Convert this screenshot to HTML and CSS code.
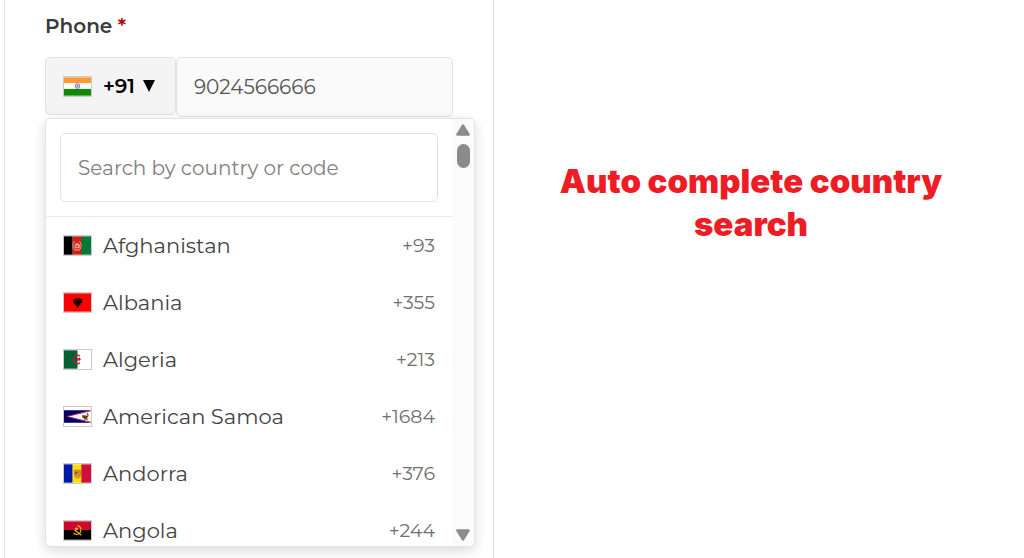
FILE: index.html
```html
<!DOCTYPE html>
<html lang="en">
<head>
    <meta charset="UTF-8">
    <meta name="viewport" content="width=device-width, initial-scale=1.0">
    <title>Phone Field</title>
    <link rel="stylesheet" href="styles.css">
</head>
<body>
    <main class="page">
        <form class="panel">
            <label class="label" for="phone">Phone <span class="required">*</span></label>
            <div class="phone-field">
                <button type="button" class="code-button" aria-expanded="true">
                    <svg class="flag" viewBox="0 0 28 19">
                        <rect width="28" height="19" fill="#fff"/>
                        <rect width="28" height="6" fill="#ff9933"/>
                        <rect y="12" width="28" height="7" fill="#138808"/>
                        <circle cx="14" cy="9" r="2.4" fill="#d8d8f0" stroke="#6a6ab8" stroke-width=".9"/>
                        <circle cx="14" cy="9" r=".8" fill="#5050a0"/>
                    </svg>
                    <span class="code">+91</span>
                    <svg class="caret" viewBox="0 0 12 12"><path d="M0 0h12L6 12z"/></svg>
                </button>
                <input class="phone-input" type="tel" id="phone" name="phone" value="9024566666">

                <div class="dropdown">
                    <div class="dropdown-main">
                        <div class="search">
                            <input class="search-input" type="text" placeholder="Search by country or code" aria-label="Search by country or code">
                        </div>
                        <ul class="countries">
                            <li class="country">
                                <svg class="flag" viewBox="0 0 28 19">
                                    <rect width="9" height="19" fill="#000"/>
                                    <rect x="9" width="10" height="19" fill="#d32011"/>
                                    <rect x="18" width="10" height="19" fill="#007a36"/>
                                    <path d="M11 5C8 9 9 13 12.500 15M16 5c3 4 2 8-1.500 10" fill="none" stroke="#ee9a92" stroke-width="1"/>
                                    <path d="M11.500 12V8.500q2-2.500 4.500 0V12zM11 14h5" fill="#ee8a80" stroke="#f0a098" stroke-width=".8"/>
                                    <path d="M12.500 10.500h2" stroke="#d32011"/>
                                </svg>
                                <span class="name">Afghanistan</span>
                                <span class="dial">+93</span>
                            </li>
                            <li class="country">
                                <svg class="flag" viewBox="0 0 28 19">
                                    <rect width="28" height="19" fill="#ff0000"/>
                                    <path d="M11.500 4.500l2 1 .5-.5.500.5 2-1 .5 1.500 2-.5-.5 3 .5 1-2 1 .5 1.500-1.500-.5-.5 1.500L14 15l-1-1.500-.5-1.500-1.500.5.5-1.500-2-1 .5-1-.5-3 2 .5z" fill="#1c0000"/>
                                </svg>
                                <span class="name">Albania</span>
                                <span class="dial">+355</span>
                            </li>
                            <li class="country">
                                <svg class="flag" viewBox="0 0 28 19">
                                    <rect width="28" height="19" fill="#fff"/>
                                    <rect width="14" height="19" fill="#006233"/>
                                    <path d="M16.500 6A4.300 4.300 0 1 0 16.500 13" fill="none" stroke="#d21034" stroke-width="1.300"/>
                                    <path d="M17 7l-.4 1.700 1.400 1-1.700.3-.5 1.800-1-1.500-1.800.2 1.200-1.300-.8-1.500 1.600.6z" fill="#d21034"/>
                                </svg>
                                <span class="name">Algeria</span>
                                <span class="dial">+213</span>
                            </li>
                            <li class="country">
                                <svg class="flag" viewBox="0 0 28 19">
                                    <rect width="28" height="19" fill="#fff"/>
                                    <path d="M0 3h28L3 9.500 28 16H0z" fill="#000066"/>
                                    <path d="M28 3.500L3 9.500l25 6" fill="none" stroke="#b31942" stroke-width="1"/>
                                    <path d="M19 8l3 .5L25 5l.5 4-1.500 2 1 2-3-.5-1.500 1 .3-2-2-1z" fill="#78532c"/>
                                    <path d="M20 9l2.500 1.500L25 8" fill="none" stroke="#28211a" stroke-width=".8"/>
                                    <path d="M23 7l1 2" stroke="#fff" stroke-width="1"/>
                                </svg>
                                <span class="name">American Samoa</span>
                                <span class="dial">+1684</span>
                            </li>
                            <li class="country">
                                <svg class="flag" viewBox="0 0 28 19">
                                    <rect width="9" height="19" fill="#0018a8"/>
                                    <rect x="9" width="10" height="19" fill="#fedf00"/>
                                    <rect x="18" width="10" height="19" fill="#d0103a"/>
                                    <path d="M11 6h6v6q-1 2-3 2.500-2-.5-3-2.500z" fill="#d5a12a" stroke="#bd812b"/>
                                    <path d="M12 8h1.500v2H12zM14.500 11H16" fill="#b34a2c" stroke="#b34a2c"/>
                                    <path d="M14.500 8H16" stroke="#777"/>
                                </svg>
                                <span class="name">Andorra</span>
                                <span class="dial">+376</span>
                            </li>
                            <li class="country">
                                <svg class="flag" viewBox="0 0 28 19">
                                    <rect width="28" height="10" fill="#cc092f"/>
                                    <rect y="9" width="28" height="10" fill="#000"/>
                                    <path d="M14 4.500q4 1 3.500 5-.5 4-4.500 4-2 0-3-1.500M11 9l7 5.500" fill="none" stroke="#e6b80a" stroke-width="1.200"/>
                                    <path d="M13 5.500l.5 1.300 1.300.2-1 1 .2 1.300-1.200-.7-1.200.6.3-1.200-.9-1 1.300-.2z" fill="#ffcb00"/>
                                </svg>
                                <span class="name">Angola</span>
                                <span class="dial">+244</span>
                            </li>
                        </ul>
                    </div>
                    <div class="scrollbar" aria-hidden="true">
                        <svg class="arrow" viewBox="0 0 14 12"><path d="M7 2l5 8H2z"/></svg>
                        <div class="thumb"></div>
                        <svg class="arrow arrow-down" viewBox="0 0 14 12"><path d="M7 10l5-8H2z"/></svg>
                    </div>
                </div>
            </div>
        </form>

        <section class="caption">
            <h2>Auto complete country search</h2>
        </section>
    </main>
</body>
</html>
```
FILE: styles.css
```css
* { box-sizing: border-box; }
body { margin: 0; background: #fff; color: #444; font-family: Montserrat, Inter, sans-serif; overflow: hidden; }
button, input { font-family: inherit; font-size: 20px; }

.page { display: flex; min-height: 100vh; padding-left: 4px; }
.panel { flex: 0 1 490px; min-width: 0; padding: 12px 40px; border-left: 1px solid #e2e2e2; border-right: 1px solid #e2e2e2; }
.label { display: block; margin-bottom: 17px; font-size: 20px; line-height: 28px; font-weight: 600; color: #3a3a3a; }
.required { color: #b30000; }

.phone-field { position: relative; display: flex; align-items: flex-start; }
.code-button { display: flex; align-items: center; height: 58px; padding: 0 20px 0 17px; border: 1px solid #e2e2e2; border-radius: 5px; background: #f4f4f4; color: #000; font-weight: 600; cursor: pointer; }
.code { margin: 0 8px 0 11px; }
.caret { width: 12px; height: 12px; }
.phone-input { flex: 1; min-width: 0; height: 60px; padding: 0 17px; border: 1px solid #e2e2e2; border-radius: 5px; background: #fafafa; color: #555; }
.flag { flex: none; width: 29px; height: 21px; border: 1px solid #ccc; }

.dropdown { position: absolute; top: 61px; left: 0; display: flex; width: 430px; height: 429px; overflow: hidden; border: 1px solid #e2e2e2; border-radius: 5px; background: #fff; box-shadow: 0 4px 14px rgba(0, 0, 0, 0.14); }
.dropdown-main { flex: 1; min-width: 0; }
.search { padding: 14px; border-bottom: 1px solid #eaeaea; }
.search-input { display: block; width: 100%; height: 69px; padding: 0 17px; border: 1px solid #e2e2e2; border-radius: 5px; background: #fff; }
.search-input::placeholder { color: #808080; opacity: 1; }

.countries { margin: 0; padding: 0; list-style: none; }
.country { display: flex; align-items: center; height: 57px; padding: 0 17px; }
.name { flex: 1; margin-left: 11px; font-size: 21px; }
.dial { font-size: 19px; color: #707070; }

.scrollbar { display: flex; flex-direction: column; align-items: center; width: 22px; padding: 4px 0; background: #fbfbfb; }
.arrow { width: 16px; height: 14px; fill: #8b8b8b; stroke: #8b8b8b; stroke-width: 2; stroke-linejoin: round; }
.thumb { width: 13px; height: 24px; margin-top: 7px; border-radius: 7px; background: #8b8b8b; }
.arrow-down { margin-top: auto; }

.caption { flex: 1; padding: 160px 56px 0 40px; }
.caption h2 { margin: 0; text-align: center; font-family: "Arial Black", Inter, sans-serif; font-weight: 900; font-size: 33px; line-height: 43px; color: #ee1c25; }
```
